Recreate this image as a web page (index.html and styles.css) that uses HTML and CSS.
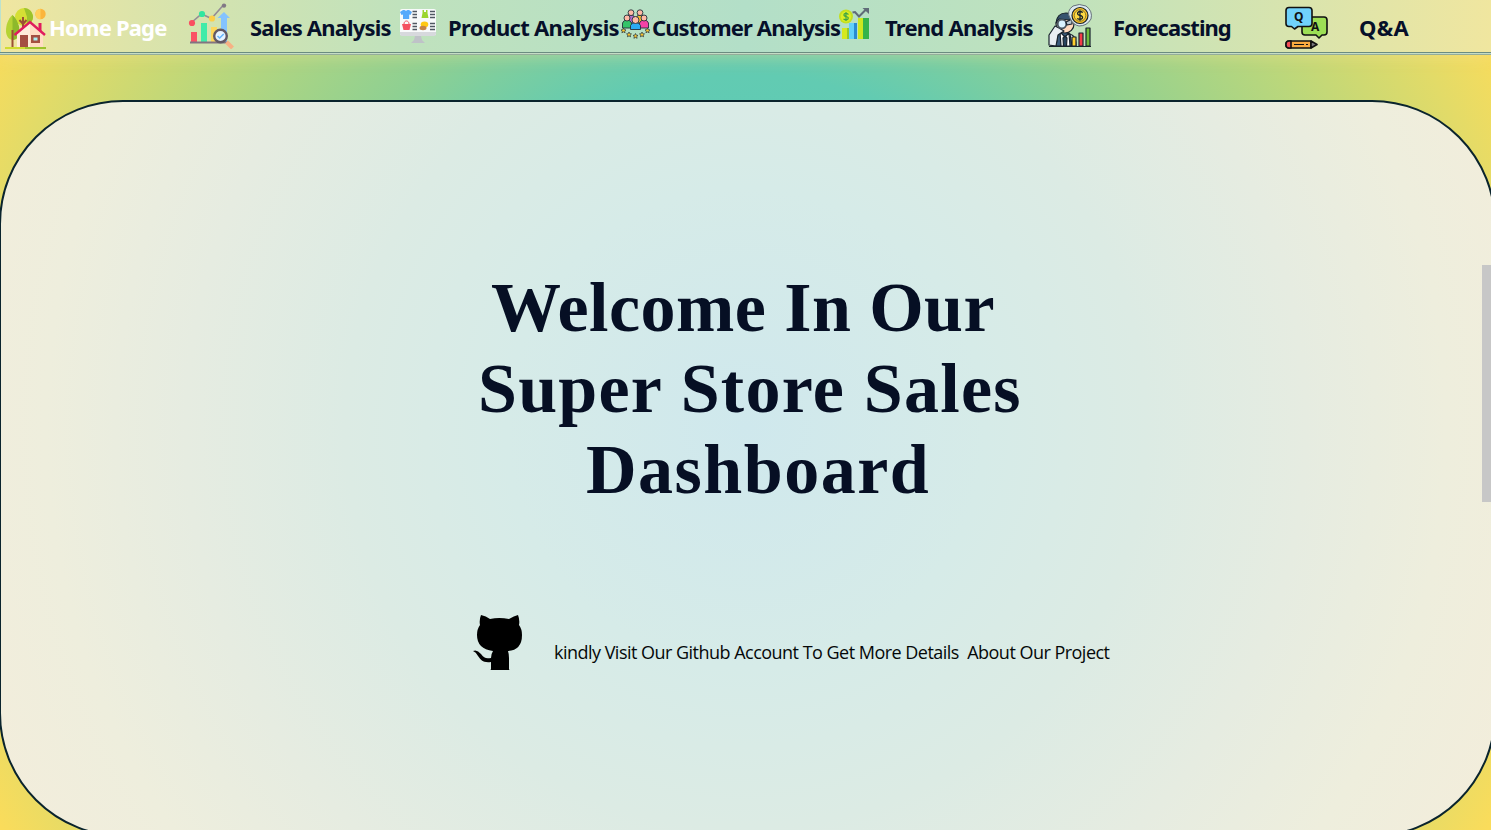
FILE: index.html
```html
<!DOCTYPE html>
<html lang="en">
<head>
<meta charset="utf-8">
<title>Super Store Sales Dashboard</title>
<link rel="stylesheet" href="styles.css">
</head>
<body>
<div class="page">
  <nav class="nav">
    <a class="item home">
      <svg width="42" height="42" viewBox="0 0 42 42">
        <circle cx="35.500" cy="6" r="5.200" fill="#fbb53c"/><path d="M35.500.8a5.200 5.200 0 0 0 0 10.400z" fill="#ffd05b"/>
        <circle cx="19" cy="9" r="9" fill="#d5df35"/><path d="M19 0a9 9 0 0 1 3 17.500V9z" fill="#9cc32c"/>
        <path d="M7.500 7C3 11 1 17 1 23c0 5 3 9 7 9s6-4 6-9S12 11 7.500 7z" fill="#b5d334"/><path d="M7.500 7v25c4 0 7-4 7-9S12 11 7.500 7z" fill="#8db92b"/>
        <path d="M7.500 22v18M18 9v12M14.500 12l3.500 4 3.500-4" stroke="#9c4f35" stroke-width="2" fill="none"/>
        <path d="M35 15v9" stroke="#e01b5d" stroke-width="3"/>
        <path d="M12 24L25 14l13 12v13H12z" fill="#ffeddb"/><path d="M25 14l13 12v13H25z" fill="#ffdcc3"/>
        <path d="M9.500 27L25 14l15 13" fill="none" stroke="#e01b5d" stroke-width="2.400"/>
        <path d="M15 27h8v12h-8zM26 27h9v8h-9z" fill="#a44f42"/><path d="M28.500 29.500h4v3h-4z" fill="#a9eef2"/>
        <path d="M0 39h41v2H0z" fill="#cfdc31"/><path d="M20 39h21v2H20z" fill="#9cc32c"/>
      </svg>
      <span>Home Page</span>
    </a>
    <a class="item sales">
      <svg width="46" height="46" viewBox="0 0 46 46">
        <path d="M3.500 19.500L13.500 11l10 4.500L35 2.500" fill="none" stroke="#948b96" stroke-width="1.600"/>
        <circle cx="36" cy="2.600" r="2.200" fill="#827985"/><circle cx="4" cy="20" r="3.100" fill="#fa4e60"/><circle cx="14" cy="11" r="3.100" fill="#30e6a0"/><circle cx="24" cy="15.500" r="3.100" fill="#fdcf48"/>
        <path d="M3 29h6v10H3z" fill="#fa5264"/><path d="M13 20h6v19h-6z" fill="#40eba9"/><path d="M23 24h6v15h-6z" fill="#fdd75c"/><path d="M33 39V15h-3.500L36 9l6 6h-3v24z" fill="#83c3ff"/>
        <path d="M2 39.500h38" stroke="#827481" stroke-width="2.200"/><path d="M38.500 39l6 6" stroke="#f7b184" stroke-width="4"/>
        <circle cx="32.500" cy="33" r="6.300" fill="#e5f3ff" stroke="#625964" stroke-width="2.400"/><path d="M29.500 33l2.200 2 4-4" fill="none" stroke="#66b4fb" stroke-width="1.600"/>
      </svg>
      <span>Sales Analysis</span>
    </a>
    <a class="item product">
      <svg width="36" height="36" viewBox="0 0 36 36">
        <path d="M0 3Q0 1 2 1h32q2 0 2 2v24H0z" fill="#f8fafb"/><path d="M0 24h36v2q0 2-2 2H2q-2 0-2-2z" fill="#d7d9dd"/><path d="M15 28h6l1 4 3 3H11l3-3z" fill="#bfc2c8"/>
        <path d="M1 4l3-2h1.500q1.500 1.500 3 0H10l3 2-1.500 3-1.300-.5V11H4V6.500L2.500 7z" fill="#57a9fb" transform="translate(-1 0)"/>
        <path d="M21.500 10l1-5V2H24v2h2V2h1.500v3l1 5z" fill="#9bd52e"/>
        <path d="M2 16h9l-1.500 6h-6z" fill="#f45062"/><path d="M4 16c0-4 5-4 5 0" stroke="#f45062" fill="none"/>
        <ellipse cx="24.500" cy="16.500" rx="3.800" ry="3" fill="#ffc913"/><ellipse cx="23" cy="20" rx="3.500" ry="2.200" fill="#c58345"/>
        <path d="M12.500 3.500h4.500M12.500 6.500h4.500M12.500 9.500h4.500M12.500 15.500h4.500M12.500 18.500h4.500M12.500 21.500h4.500M30 3.500h5M30 6.500h5M30 9.500h5M30 15.500h5M30 18.500h5M30 21.500h5" stroke="#505762" stroke-width="1.300"/>
      </svg>
      <span>Product Analysis</span>
    </a>
    <a class="item customer">
      <svg width="29" height="30" viewBox="0 0 29 30" stroke="#24303b" stroke-width=".9">
        <path d="M5 14V9q1-4 5-3 4 0 4 4v4z" fill="#b16bd0"/><path d="M15 14v-4q0-4 4-4t5 3v5z" fill="#f5bd2d"/>
        <circle cx="10" cy="3.700" r="2.900" fill="#ffb9a5"/><circle cx="19" cy="3.700" r="2.900" fill="#ffb9a5"/>
        <path d="M1.500 19v-5q1-3 4.500-3t4.500 3v5z" fill="#33c469"/><path d="M18.500 19v-5q1-3 4.500-3t4.500 3v5z" fill="#f343a6"/>
        <circle cx="6" cy="9" r="3" fill="#ffb9a5"/><circle cx="23" cy="9" r="3" fill="#ffb9a5"/>
        <path d="M9.500 20.500v-4q1-3 5-3t5 3v4z" fill="#2aaaf3"/><circle cx="14.500" cy="11" r="3.500" fill="#ffb9a5"/>
        <g fill="#fbc52e" stroke-width=".7"><path id="star" d="M2.500 19l.8 1.700 1.700.2-1.300 1.200.4 1.700-1.600-.9-1.600.9.400-1.700L0 20.900l1.700-.2z"/><use href="#star" x="5.500" y="4"/><use href="#star" x="12" y="5.500"/><use href="#star" x="18.500" y="4"/><use href="#star" x="24" y="0"/></g>
      </svg>
      <span>Customer Analysis</span>
    </a>
    <a class="item trend">
      <svg width="30" height="32" viewBox="0 0 30 32">
        <path d="M3 20h5v11H3z" fill="#d5e91f"/><path d="M8 20h2v11H8z" fill="#93c92d"/><path d="M10 15h5v16h-5z" fill="#62d1fa"/><path d="M15 15h3v16h-3z" fill="#298bd2"/><path d="M19 10h5v21h-5z" fill="#cce71f"/><path d="M24 10h6v21h-6z" fill="#35b34a"/>
        <circle cx="7" cy="8.500" r="7" fill="#c4df20"/><circle cx="7" cy="8.500" r="5.200" fill="#dcee24"/>
        <path d="M9.500 6.500Q7 4.500 5.200 6q-1 2 1.800 2.500 3 .5 2 2.600-2 1.500-4.500-.2M7 4v9" fill="none" stroke="#3fa444" stroke-width="1.200"/>
        <path d="M13.500 4.500L16 4l4 4.500 7-7" fill="none" stroke="#606b78" stroke-width="2"/><path d="M23.500 0H30v6z" fill="#606b78"/>
      </svg>
      <span>Trend Analysis</span>
    </a>
    <a class="item forecast">
      <svg width="45" height="44" viewBox="0 0 45 44" stroke="#18232d" stroke-width="1.200" stroke-linejoin="round">
        <path d="M3 42q0-9 7-12l6-2 8 3q4 2 4 11z" fill="#f5f8fb"/>
        <path d="M10 29l5-2 7 3 2 12H8z" fill="#3a5c7d"/><path d="M12 28l5 5 4-4 1 13h-9z" fill="#fff"/><path d="M17 32l2 2-.500 8h-3l-.5-8z" fill="#29455e"/>
        <circle cx="17" cy="20" r="9" fill="#ffd9bd"/><path d="M8 19q1-10 10-10 5 0 8 4l-4 3-11-1z" fill="#36536f"/>
        <path d="M1 41V31l6-9 4 2 5 3-6 4-2 11z" fill="#e8eef3"/><circle cx="14" cy="20" r="4.300" fill="#d9f3ff" stroke="#4a5660" stroke-width="1.800"/>
        <path d="M18 18l6-3v5l-5 1z" fill="#b6c4ce"/>
        <path d="M22 14q-4-7 3-12 6-3 13 0 7 5 5 13-4 7-12 7-6-1-9-8z" fill="#dce9ef" stroke="#65717a" stroke-width="1"/>
        <circle cx="32" cy="11.500" r="8" fill="#ffc626"/><circle cx="32" cy="11.500" r="5.800" fill="#ffda42" stroke-width=".5"/>
        <path d="M34.800 8.500q-3-2-5 0-1 2.200 2.200 3 3.500.7 2.200 3-2 1.800-5 0M32 6.300v10.500" fill="none" stroke-width="1.300"/>
        <path d="M24 33h4v9h-4z" fill="#ffd02e"/><path d="M31 29h4v13h-4z" fill="#f43c48"/><path d="M38 24h4v18h-4z" fill="#6fba3c"/><path d="M1 42.500h42" stroke-width="1"/>
      </svg>
      <span>Forecasting</span>
    </a>
    <a class="item qa">
      <svg width="44" height="43" viewBox="0 0 44 43" stroke="#111" stroke-width="1.600" stroke-linejoin="round">
        <path d="M19 11h20q3 0 3 3v12q0 3-3 3h-2l-3 3-3-3H20q-3 0-3-3V11z" fill="#9ddf55"/>
        <path d="M4 1.500h20q3 0 3 3v13q0 3-3 3H13L9.500 23 6.500 20.500H4q-3 0-3-3v-13q0-3 3-3z" fill="#70d2fb"/>
        <path d="M4 35h22v7H4q-3 0-3-3v-1q0-3 3-3z" fill="#faaa3f"/><path d="M6 35v7H4q-3 0-3-3v-1q0-3 3-3z" fill="#f44d56"/><path d="M26 35l6 3.500-6 3.500z" fill="#77767b"/><path d="M9 38.500h10M21 38.500h2" fill="none" stroke-width="1.200"/>
        <g stroke="none" fill="#111" class="letters"><text x="9" y="15">Q</text><text x="26" y="25">A</text></g>
      </svg>
      <span>Q&amp;A</span>
    </a>
  </nav>
  <main class="panel">
    <h1><span class="l1">Welcome In Our</span><span class="l2">Super Store Sales</span><span class="l3">Dashboard</span></h1>
    <div class="github">
      <svg width="51" height="56" viewBox="0 0 51 56"><path d="M8 0q5 1 9 4 9-2 19 0 5-3 9-4 2 5 1 10 3 4 3 10 0 15-14 16 1 3 1 7v11q0 1 1 1H17q1 0 1-1v-7c-8 1-10-2-13-6q-2-4-5-5 4-2 8 3c3 4 5 5 10 4q0-4 2-7Q4 34 4 20q0-6 3-10-1-5 1-10z"/></svg>
      <span class="note">kindly Visit Our Github Account To Get More Details &nbsp;About Our Project</span>
    </div>
  </main>
  <div class="scroll-thumb"></div>
</div>
</body>
</html>
```
FILE: styles.css
```css
* { box-sizing: border-box; }
body { margin: 0; }
.page {
  position: relative;
  width: 1491px;
  height: 830px;
  overflow: hidden;
  background: radial-gradient(circle at 745px 425px, #4fc8c0 0, #62cbb2 350px, #8fd092 480px, #bbd77b 640px, #e2db68 770px, #fadc5b 845px);
}
.nav {
  display: grid;
  grid-template-columns: 183px 212px 221px 218px 209px 237px 206px;
  height: 55px;
  padding-left: 5px;
  background: linear-gradient(90deg, #f0e6a0, #d5e3ae 190px, #c0e2bd 400px, #b3dfc8 745px, #bfe2bd 1060px, #d8e4ae 1290px, #f0e69f);
  border-bottom: 1px solid #94ad9a;
  box-shadow: inset 0 -1px #c5dcc5, inset 0 -2px #6b8c80, inset 1px 0 #bce2ce, 0 0 18px rgba(255, 225, 150, .45);
}
.item {
  display: flex;
  align-items: flex-start;
  white-space: nowrap;
  color: #06102a;
  font: bold 22px/30px "Noto Sans", "Open Sans", sans-serif;
}
.item svg { flex: none; }
.item span { margin-top: 12px; }
.home { gap: 2px; color: #fff; letter-spacing: -.8px; }
.home svg { margin-top: 8px; }
.sales { gap: 16px; letter-spacing: -.82px; }
.sales svg { margin-top: 3px; }
.product { gap: 12px; letter-spacing: -.7px; }
.product svg { margin-top: 8px; }
.customer { gap: 2px; letter-spacing: -.9px; }
.customer svg { margin-top: 9px; }
.trend { gap: 16px; letter-spacing: -.77px; }
.trend svg { margin-top: 8px; }
.forecast { gap: 20px; letter-spacing: -.95px; }
.forecast svg { margin-top: 4px; }
.qa { gap: 30px; letter-spacing: .3px; }
.qa svg { margin-top: 6px; }
.letters { font: bold 12px "Noto Sans", sans-serif; letter-spacing: 0; }
.panel {
  width: 1497px;
  height: 737px;
  margin: 45px 0 0 -1px;
  padding-top: 165px;
  border: 2px solid #0a242d;
  border-radius: 124px;
  background: radial-gradient(circle at 745px 325px, #cfe8ed 0, #d6ebe8 240px, #dcebe4 400px, #e6ece1 560px, #eeeedd 700px, #f3eddb 840px);
}
h1 {
  display: flex;
  flex-direction: column;
  margin: 0;
  color: #060f24;
  font: bold 70px/81px "Liberation Serif", serif;
  white-space: nowrap;
}
.l1 { margin-left: 490px; letter-spacing: .45px; }
.l2 { margin-left: 477px; letter-spacing: 1.25px; }
.l3 { margin-left: 585px; letter-spacing: 1.5px; }
.github {
  display: flex;
  gap: 30px;
  margin: 105px 0 0 472px;
}
.note {
  margin-top: 24px;
  color: #050808;
  font: 18px/26px "Open Sans", "Noto Sans", sans-serif;
  letter-spacing: -.52px;
  white-space: nowrap;
}
.scroll-thumb {
  position: absolute;
  right: 0;
  top: 265px;
  width: 9px;
  height: 237px;
  background: #c7c7c7;
}
```
